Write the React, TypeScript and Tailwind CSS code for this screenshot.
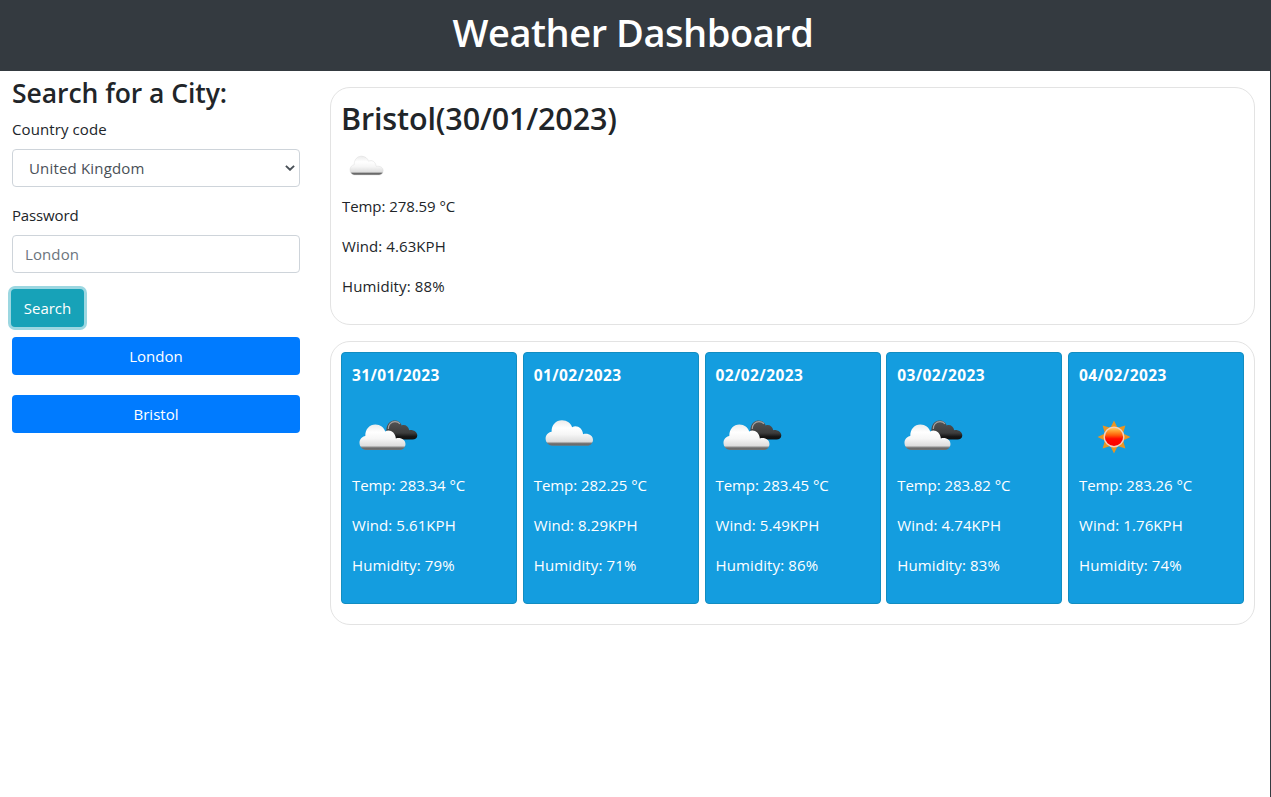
import React from "react";

type Sky = "cloud" | "broken" | "sun";

interface Reading {
  temp: string;
  wind: string;
  humidity: string;
}

interface Forecast extends Reading {
  date: string;
  sky: Sky;
}

const forecasts: Forecast[] = [
  { date: "31/01/2023", sky: "broken", temp: "283.34", wind: "5.61", humidity: "79" },
  { date: "01/02/2023", sky: "cloud", temp: "282.25", wind: "8.29", humidity: "71" },
  { date: "02/02/2023", sky: "broken", temp: "283.45", wind: "5.49", humidity: "86" },
  { date: "03/02/2023", sky: "broken", temp: "283.82", wind: "4.74", humidity: "83" },
  { date: "04/02/2023", sky: "sun", temp: "283.26", wind: "1.76", humidity: "74" },
];

const CLOUD =
  "M7 26C3 26 .3 22.4 .3 18.8C.3 15.2 3 12.6 6.3 12C6.1 5.2 10.7 .5 16.7 .5C21.8 .5 25.6 3.6 26.8 7.4C31.6 4.9 37 8.1 37.8 14.4C43 13.1 47.7 15.8 47.7 20C47.7 23.3 45.2 26 42 26Z";

function Defs() {
  return (
    <svg className="absolute size-0" aria-hidden="true">
      <defs>
        <linearGradient id="cloud-white" x1="0" y1="0" x2="0" y2="1">
          <stop offset="0" stopColor="#ececec" />
          <stop offset=".3" stopColor="#ffffff" />
          <stop offset=".55" stopColor="#f6f6f6" />
          <stop offset=".83" stopColor="#dedede" />
          <stop offset=".88" stopColor="#a0a0a0" />
          <stop offset=".92" stopColor="#686868" />
          <stop offset="1" stopColor="#747474" />
        </linearGradient>
        <linearGradient id="cloud-dark" x1="0" y1="0" x2="0" y2="1">
          <stop offset="0" stopColor="#555555" />
          <stop offset=".65" stopColor="#3d3d3d" />
          <stop offset=".85" stopColor="#161616" />
          <stop offset="1" stopColor="#111111" />
        </linearGradient>
        <linearGradient id="sun-core" x1="0" y1="0" x2="0" y2="1">
          <stop offset="0" stopColor="#ffd070" />
          <stop offset=".2" stopColor="#ffa030" />
          <stop offset=".42" stopColor="#ff5a08" />
          <stop offset=".6" stopColor="#ff0800" />
          <stop offset="1" stopColor="#f90000" />
        </linearGradient>
      </defs>
    </svg>
  );
}

function SkyIcon({ sky }: { sky: Sky }) {
  if (sky === "cloud") {
    return (
      <svg className="h-[50px] w-[75px]" viewBox="0 0 75 50">
        <path d={CLOUD} transform="translate(11.3 8.8)" fill="url(#cloud-white)" />
      </svg>
    );
  }
  if (sky === "broken") {
    return (
      <svg className="h-[50px] w-[75px]" viewBox="0 0 75 50">
        <path
          d="M39 28.5C35 26 33.6 20 34.8 16C36 11.8 39 9.6 42.5 9.6C46.2 9.6 48.9 11.7 49.6 14.4C52.8 13 56.5 15 57.2 19.2C61 18.5 65.3 20.8 65.3 24.4C65.3 27 63.2 28.5 60.5 28.5Z"
          fill="url(#cloud-dark)"
        />
        <path d="M36.3 18C36.1 13.6 39.3 10.6 43 10.6C45 10.6 46.8 11.4 48 12.8" fill="none" stroke="#b9b9b9" strokeWidth="1.2" opacity=".8" />
        <path d={CLOUD} transform="translate(7.2 13) scale(.97 1)" fill="url(#cloud-white)" />
      </svg>
    );
  }
  return (
    <svg className="h-[50px] w-[75px]" viewBox="0 0 75 50">
      <g transform="translate(0 -.5)">
        <path
          d="M35 10L38.6 17.2L46.4 14.9L44 22.9L51.5 26.4L44 29.9L46.4 37.9L38.6 35.6L35 43L31.4 35.6L23.6 37.9L26 29.9L18.5 26.4L26 22.9L23.6 14.9L31.4 17.2Z"
          fill="#e99522"
        />
        <circle cx="35" cy="26.4" r="9.8" fill="url(#sun-core)" stroke="#f3d1bf" strokeWidth="1.4" />
      </g>
    </svg>
  );
}

function Readings({ temp, wind, humidity }: Reading) {
  return (
    <div className="flex flex-col gap-4">
      <p className="tracking-[-0.07px]">Temp: {temp} °C</p>
      <p className="tracking-[0.08px]">Wind: {wind}KPH</p>
      <p className="tracking-[0.12px]">Humidity: {humidity}%</p>
    </div>
  );
}

function SearchPanel() {
  return (
    <aside className="w-[330px] pt-[5px] pr-[30px] pl-3">
      <h3 className="text-[26.5px] leading-[34px] font-semibold tracking-[-0.05px] whitespace-nowrap">Search for a City:</h3>
      <label className="mt-[7px] block tracking-[0.1px]" htmlFor="country">Country code</label>
      <div className="mt-2 flex h-[38px] items-center justify-between rounded border border-[#ced4da] pr-1 pl-4 tracking-[0.17px] text-[#495057]" id="country">
        <span>United Kingdom</span>
        <svg className="h-[6px] w-[10px]" viewBox="0 0 10 6">
          <path d="M.9 .9L5 4.8L9.1 .9" fill="none" stroke="#495057" strokeWidth="1.9" />
        </svg>
      </div>
      <label className="mt-4 block tracking-[-0.15px]" htmlFor="city">Password</label>
      <input
        id="city"
        className="mt-2 block h-[38px] w-full rounded border border-[#ced4da] px-3 tracking-[0.1px] placeholder:text-[#6c757d]"
        placeholder="London"
      />
      <button className="mt-4 -ml-px block h-[38px] w-[73px] rounded bg-[#17a2b8] text-white ring-3 ring-[#9cd7e1]">Search</button>
      <div className="mt-[10px] flex flex-col gap-5">
        <button className="h-[38px] rounded bg-[#007bff] text-white">London</button>
        <button className="h-[38px] rounded bg-[#007bff] text-white">Bristol</button>
      </div>
    </aside>
  );
}

export default function App() {
  return (
    <div className="flex h-[797px] w-[1271px] flex-col overflow-hidden border-r border-[#343a40] bg-white font-['Open_Sans','Noto_Sans',sans-serif] text-[15px] leading-6 text-[#212529]">
      <Defs />
      <header className="h-[71px] bg-[#343a40] pt-2 pr-1">
        <h1 className="text-center text-[38px] leading-[48px] font-semibold tracking-[-0.45px] text-white">Weather Dashboard</h1>
      </header>
      <div className="flex">
        <SearchPanel />
        <main className="flex w-[925px] flex-col gap-4 pt-4">
          <section className="h-[238px] rounded-[20px] border border-[#e3e3e3] px-[11px] pt-[11px]">
            <h2 className="-ml-px text-[30.5px] leading-[38px] font-semibold tracking-[-0.14px]">Bristol(30/01/2023)</h2>
            <svg className="mt-2 -mb-px h-[50px] w-[50px]" viewBox="0 0 50 50">
              <path d={CLOUD} transform="translate(7.8 10.8) scale(.7 .74)" fill="url(#cloud-white)" stroke="#d8d8d8" strokeWidth=".6" />
            </svg>
            <Readings temp="278.59" wind="4.63" humidity="88" />
          </section>
          <section className="flex h-[284px] justify-between rounded-[20px] border border-[#e3e3e3] px-[10px] pt-[10px]">
            {forecasts.map(({ date, sky, ...reading }) => (
              <article key={date} className="h-[252px] w-[176px] rounded border border-[#128dc1] bg-[#149ddf] px-[10px] pt-[10px] text-white">
                <h5 className="text-[15.5px] font-bold tracking-[0.4px]">{date}</h5>
                <div className="mt-6 mb-3 h-[50px]">
                  <SkyIcon sky={sky} />
                </div>
                <Readings {...reading} />
              </article>
            ))}
          </section>
        </main>
      </div>
    </div>
  );
}
